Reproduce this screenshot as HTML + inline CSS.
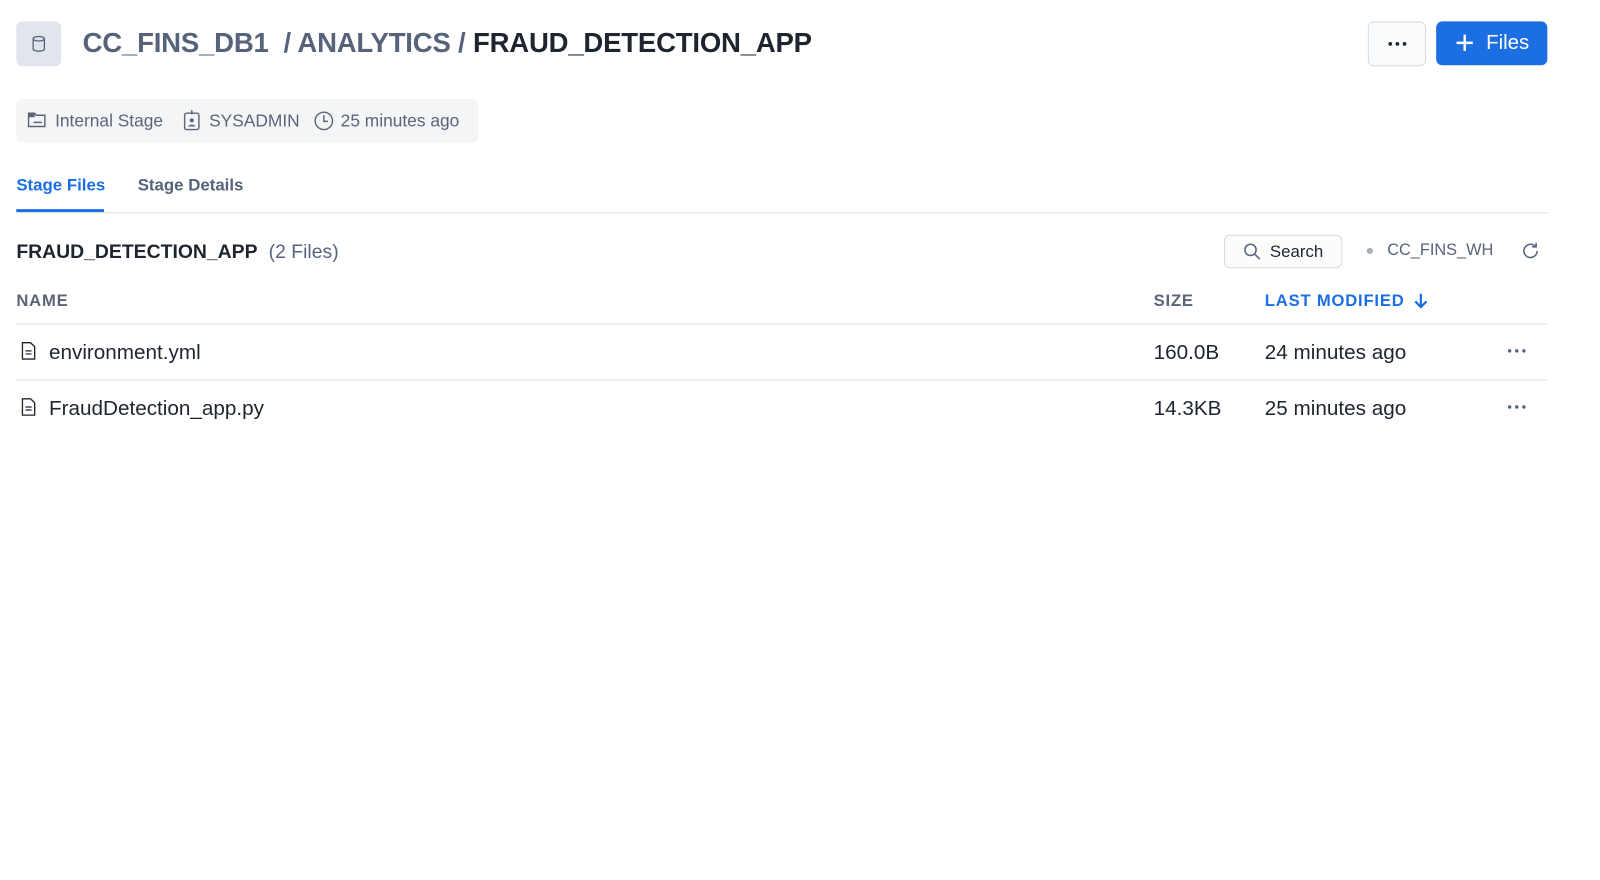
<!DOCTYPE html>
<html><head><meta charset="utf-8"><style>
*{box-sizing:border-box;margin:0;padding:0}
body{width:1600px;height:863px;background:#fff;font-family:"Liberation Sans",sans-serif;position:relative;overflow:hidden;color:#1e252f}
#w{position:absolute;left:0;top:0;width:1600px;height:863px;transform:scale(1.02);transform-origin:0 0}
.abs{position:absolute}
.dbicon{left:16px;top:21px;width:44px;height:44px;background:#e1e5ec;border-radius:6px}
.title{left:81px;top:27px;font-size:27px;font-weight:bold;white-space:nowrap;letter-spacing:-0.2px}
.title .g{color:#56637a}
.btn1{left:1341px;top:21px;width:57px;height:44px;border:1px solid #d6dae0;border-radius:6px;background:#fafbfc}
.btn2{left:1408px;top:21px;width:109px;height:43px;background:#1b6fe3;border-radius:6px;color:#fff;font-size:20px}
.meta{left:16px;top:97px;width:453px;height:43px;background:#f4f5f6;border-radius:6px;font-size:17px;color:#5b6577}
.meta span{position:absolute;top:12px}
.tab{top:173px;font-size:16.5px;font-weight:bold}
.line{left:16px;width:1501px;height:1px;background:#dde1e7}
.hdr{top:286px;font-size:16.3px;font-weight:bold;letter-spacing:0.8px;color:#5b6577}
.row{font-size:20.3px;color:#1e252f}
</style></head><body><div id="w">
<div class="abs dbicon"><svg width="44" height="44" viewBox="0 0 44 44"><ellipse cx="22" cy="17" rx="5.5" ry="2.2" fill="none" stroke="#56637a" stroke-width="1.3"/><path d="M16.5 17v10c0 1.2 2.5 2.2 5.5 2.2s5.5-1 5.5-2.2V17" fill="none" stroke="#56637a" stroke-width="1.3"/></svg></div>
<div class="abs title"><span class="g">CC_FINS_DB1&nbsp;&nbsp;/ ANALYTICS / </span>FRAUD_DETECTION_APP</div>
<div class="abs btn1"><svg width="57" height="44"><circle cx="21" cy="21" r="1.8" fill="#1e252f"/><circle cx="28" cy="21" r="1.8" fill="#1e252f"/><circle cx="35" cy="21" r="1.8" fill="#1e252f"/></svg></div>
<div class="abs btn2"><svg class="abs" style="left:18px;top:11px" width="20" height="20"><path d="M10 2v16M2 10h16" stroke="#fff" stroke-width="2.4"/></svg><span class="abs" style="left:49px;top:10px">Files</span></div>
<div class="abs meta">
<svg class="abs" style="left:11px;top:12px" width="20" height="18"><path d="M1 2h6l1.5 2H17v11H1z" fill="none" stroke="#5b6577" stroke-width="1.4"/><path d="M1 2h6v4H1z" fill="#5b6577"/><path d="M6 11h8" stroke="#5b6577" stroke-width="1.4"/></svg>
<span style="left:38px">Internal Stage</span>
<svg class="abs" style="left:163px;top:11px" width="18" height="20"><rect x="2" y="3" width="14" height="16" rx="2" fill="none" stroke="#5b6577" stroke-width="1.4"/><path d="M9 0v4" stroke="#5b6577" stroke-width="1.6"/><circle cx="9" cy="10" r="2" fill="#5b6577"/><path d="M5.5 16c0-2.5 7-2.5 7 0z" fill="#5b6577"/></svg>
<span style="left:189px">SYSADMIN</span>
<svg class="abs" style="left:291px;top:11px" width="21" height="21"><circle cx="10.5" cy="10.5" r="8.5" fill="none" stroke="#5b6577" stroke-width="1.4"/><path d="M10.5 5v6h4" fill="none" stroke="#5b6577" stroke-width="1.4"/></svg>
<span style="left:318px">25 minutes ago</span>
</div>
<div class="abs tab" style="left:16px;color:#1b6fe3">Stage Files</div>
<div class="abs tab" style="left:135px;color:#56637a">Stage Details</div>
<div class="abs" style="left:16px;top:205px;width:86px;height:3px;background:#1b6fe3"></div>
<div class="abs line" style="top:208px"></div>
<div class="abs" style="left:16px;top:237px;font-size:19px;font-weight:bold">FRAUD_DETECTION_APP <span style="font-weight:normal;color:#56637a;margin-left:6px">(2 Files)</span></div>
<div class="abs" style="left:1200px;top:230px;width:116px;height:33px;border:1px solid #d6dae0;border-radius:6px;background:#fcfcfd"><svg class="abs" style="left:18px;top:7px" width="18" height="18"><circle cx="7" cy="7" r="5.5" fill="none" stroke="#56637a" stroke-width="1.5"/><path d="M11 11l5 5" stroke="#56637a" stroke-width="1.5"/></svg><span class="abs" style="left:44px;top:7px;font-size:16.5px">Search</span></div>
<div class="abs" style="left:1340px;top:243px;width:6px;height:6px;border-radius:50%;background:#a9b0bb"></div>
<div class="abs" style="left:1360px;top:237px;font-size:16px;color:#56637a">CC_FINS_WH</div>
<svg class="abs" style="left:1491px;top:236px" width="20" height="20"><path d="M16 10a6.5 6.5 0 1 1-2-4.7" fill="none" stroke="#56637a" stroke-width="1.5"/><path d="M15 2v4h-4" fill="none" stroke="#56637a" stroke-width="1.5"/></svg>
<div class="abs hdr" style="left:16px">NAME</div>
<div class="abs hdr" style="left:1131px">SIZE</div>
<div class="abs hdr" style="left:1240px;color:#1b6fe3">LAST MODIFIED</div>
<svg class="abs" style="left:1384px;top:286px" width="18" height="18"><path d="M9 2v13M3.5 9.5L9 15l5.5-5.5" fill="none" stroke="#1b6fe3" stroke-width="2.2"/></svg>
<div class="abs line" style="top:317px"></div>
<div class="abs line" style="top:372px"></div>
<svg class="abs" style="left:20px;top:335px" width="16" height="18"><path d="M2 1h8l4 4v12H2z" fill="none" stroke="#1e252f" stroke-width="1.3"/><path d="M5 9h6M5 12h6" stroke="#1e252f" stroke-width="1.2"/></svg>
<div class="abs row" style="left:48px;top:335px">environment.yml</div>
<div class="abs row" style="left:1131px;top:335px">160.0B</div>
<div class="abs row" style="left:1240px;top:335px">24 minutes ago</div>
<svg class="abs" style="left:1476px;top:340px" width="24" height="8"><circle cx="4" cy="4" r="1.7" fill="#56637a"/><circle cx="11" cy="4" r="1.7" fill="#56637a"/><circle cx="18" cy="4" r="1.7" fill="#56637a"/></svg>
<svg class="abs" style="left:20px;top:390px" width="16" height="18"><path d="M2 1h8l4 4v12H2z" fill="none" stroke="#1e252f" stroke-width="1.3"/><path d="M5 9h6M5 12h6" stroke="#1e252f" stroke-width="1.2"/></svg>
<div class="abs row" style="left:48px;top:390px">FraudDetection_app.py</div>
<div class="abs row" style="left:1131px;top:390px">14.3KB</div>
<div class="abs row" style="left:1240px;top:390px">25 minutes ago</div>
<svg class="abs" style="left:1476px;top:395px" width="24" height="8"><circle cx="4" cy="4" r="1.7" fill="#56637a"/><circle cx="11" cy="4" r="1.7" fill="#56637a"/><circle cx="18" cy="4" r="1.7" fill="#56637a"/></svg>
</div></body></html>
